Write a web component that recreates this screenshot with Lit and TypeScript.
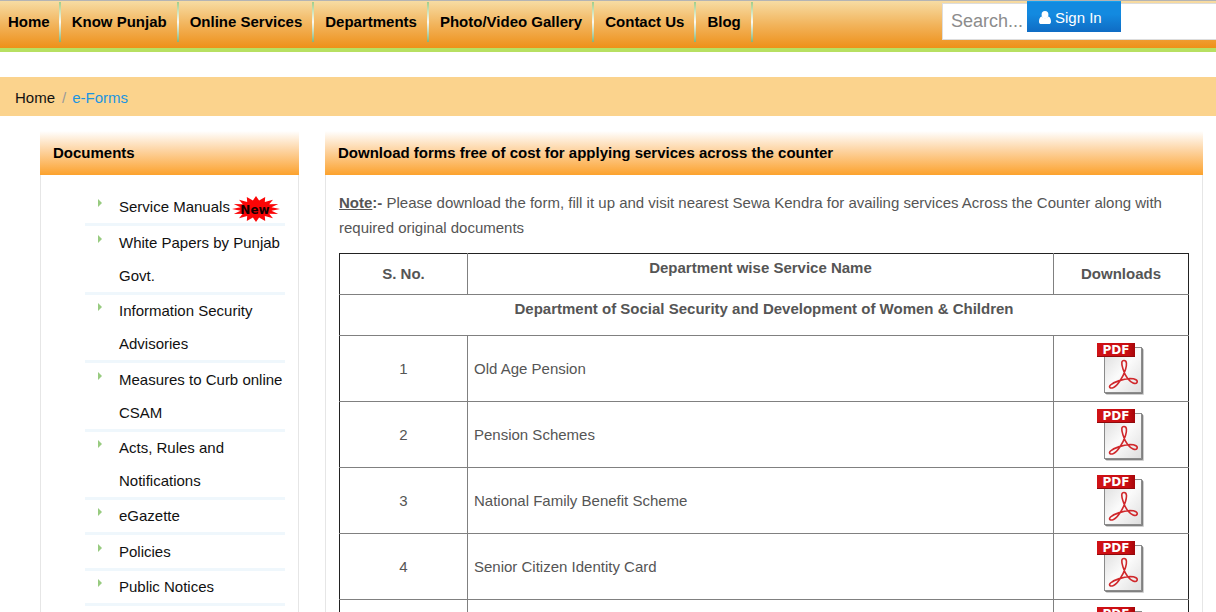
import { LitElement, html, css, svg, nothing } from "lit";
import { customElement } from "lit/decorators.js";

const NAV = ["Home", "Know Punjab", "Online Services", "Departments", "Photo/Video Gallery", "Contact Us", "Blog"];

const DOCUMENTS: { label: string; fresh?: boolean }[] = [
  { label: "Service Manuals", fresh: true },
  { label: "White Papers by Punjab Govt." },
  { label: "Information Security Advisories" },
  { label: "Measures to Curb online CSAM" },
  { label: "Acts, Rules and Notifications" },
  { label: "eGazette" },
  { label: "Policies" },
  { label: "Public Notices" },
];

const SERVICES = [
  { no: "1", name: "Old Age Pension" },
  { no: "2", name: "Pension Schemes" },
  { no: "3", name: "National Family Benefit Scheme" },
  { no: "4", name: "Senior Citizen Identity Card" },
  { no: "", name: "" },
];

// Spiky ellipse outline for the "New" badge.
function burst(cx: number, cy: number, rx: number, ry: number, spikes: number): string {
  const pts: string[] = [];
  for (let i = 0; i < spikes * 2; i++) {
    const a = (Math.PI * i) / spikes;
    const k = i % 2 ? 0.66 : 1;
    pts.push(`${(cx + Math.cos(a) * rx * k).toFixed(1)},${(cy + Math.sin(a) * ry * k).toFixed(1)}`);
  }
  return pts.join(" ");
}

@customElement("pdf-icon")
export class PdfIcon extends LitElement {
  static styles = css`
    :host { display: block; }
    svg { display: block; margin: 0 auto; }
    .label { font: bold 12px "DejaVu Sans", sans-serif; }
  `;
  render() {
    return html`<svg width="48" height="53" viewBox="0 0 48 53" aria-hidden="true">
      <defs>
        <linearGradient id="sheet" x1="0" y1="0" x2="1" y2="1">
          <stop offset="0" stop-color="#d9d9d9" /><stop offset="0.5" stop-color="#fbfbfb" /><stop offset="1" stop-color="#dedede" />
        </linearGradient>
        <linearGradient id="band" x1="0" y1="0" x2="1" y2="0">
          <stop offset="0" stop-color="#d01216" /><stop offset="0.8" stop-color="#c90d12" /><stop offset="1" stop-color="#a4060a" />
        </linearGradient>
      </defs>
      ${svg`
      <rect x="9" y="7" width="38" height="46" rx="1" fill="#cfcfcf" />
      <rect x="8" y="6" width="38" height="46" rx="1" fill="#808080" />
      <rect x="7.500" y="5.500" width="37" height="45" fill="url(#sheet)" stroke="#8a8a8a" />
      <path fill="none" stroke="#d0282c" stroke-width="1.600" stroke-linejoin="round" stroke-linecap="round"
        d="M26 27C24 21 24.500 18.500 27 18.500C30 18.500 30 22.500 28.500 27.500C26 35.500 20.500 43.500 16.500 45.500C13 47 11.500 45 13.500 43C17.500 39.500 26.500 37 33 36.500C38.500 36.500 41 38.500 40 40.500C38.500 43 34 40.500 31 37C28.500 34 27 30.500 26 27Z" />
      <rect x="0" y="1" width="38" height="14" fill="url(#band)" />
      <rect x="0" y="14" width="38" height="1" fill="#8e0a0c" />
      <text class="label" x="19" y="12" text-anchor="middle" fill="#fff">PDF</text>`}
    </svg>`;
  }
}

@customElement("new-badge")
export class NewBadge extends LitElement {
  static styles = css`
    :host { display: inline-block; margin-left: 2px; vertical-align: middle; }
    svg { display: block; }
    .word { font: bold 12px "DejaVu Sans", sans-serif; }
  `;
  render() {
    return html`<svg width="48" height="28" viewBox="0 0 48 28" role="img" aria-label="New">
      ${svg`<polygon points=${burst(24, 15, 24, 13, 16)} fill="#fb0506" />
      <text class="word" x="23" y="20" text-anchor="middle" fill="#150000">New</text>`}
    </svg>`;
  }
}

@customElement("app-root")
export class AppRoot extends LitElement {
  static styles = css`
    :host {
      display: block;
      height: 100vh;
      overflow: hidden;
      background: #fff;
      color: #555;
      font: 15px/25px "Liberation Sans", Arial, sans-serif;
    }
    *, *::before { box-sizing: border-box; }
    a { color: inherit; text-decoration: none; }
    ul, ol { list-style: none; margin: 0; padding: 0; }

    .bar {
      display: flex;
      justify-content: space-between;
      height: 52px;
      border-top: 1px solid #b4b4b4;
      border-bottom: 4px solid #b7e062;
      background: linear-gradient(#f7dca3, #f2b45c 50%, #ee9019);
    }
    .menu { display: flex; padding-top: 1px; }
    .menu li {
      height: 40px;
      padding: 0 10px 0 11px;
      border-right: 2px solid;
      border-image: linear-gradient(#9ccb84, #fdfaf0 50%, #7eb173) 1;
      border-image-width: 0 2px 0 0;
      color: #000;
      font-weight: bold;
      line-height: 40px;
      white-space: nowrap;
    }
    .menu li:first-child { padding: 0 9px 0 8px; }
    .search { position: relative; flex: 0 0 274px; padding-top: 2px; }
    .search input {
      display: block;
      width: 100%;
      height: 37px;
      padding: 0 8px;
      border: 1px solid #ddd;
      border-right: 0;
      border-radius: 0;
      background: #fff;
      font: 18px "Liberation Sans", Arial, sans-serif;
    }
    .search input::placeholder { color: #8c8c8c; opacity: 1; }
    .signin {
      position: absolute;
      top: 0;
      left: 85px;
      display: flex;
      align-items: center;
      gap: 4px;
      width: 94px;
      height: 31px;
      padding: 0 12px;
      border: 0;
      border-top: 1px solid #12a0f0;
      background: linear-gradient(#138ae0 40%, #0f6cc4);
      color: #fff;
      font: 15px "Liberation Sans", Arial, sans-serif;
      white-space: nowrap;
    }

    .crumbs {
      display: flex;
      margin-top: 25px;
      padding: 8px 15px 6px;
      background: #fbd38d;
      color: #111;
    }
    .crumbs li + li::before { content: "/"; padding: 0 6px 0 7px; color: #999; }
    .crumbs .here { color: #1b95e0; }

    .columns {
      display: grid;
      grid-template-columns: minmax(0, 259fr) minmax(0, 878fr);
      gap: 26px;
      padding: 15px 13px 0 40px;
    }
    .panel { border: 1px solid #e6e6e6; border-top: 0; min-height: 100vh; }
    .panel h2 {
      margin: 0 -1px;
      padding: 0 13px;
      background: linear-gradient(#fff, #fdd3a0 45%, #fca22d);
      color: #000;
      font-size: 15px;
      line-height: 44px;
    }
    .docs { padding: 15px 13px 0 44px; }
    .docs li {
      position: relative;
      padding-left: 34px;
      border-bottom: 3px solid #eff7fc;
      color: #111;
      line-height: 33px;
    }
    .docs li + li { margin-top: -1px; }
    .docs li:nth-child(3n + 1),
    .docs li:nth-child(2) { margin-top: 0; }
    .docs li::before {
      content: "";
      position: absolute;
      left: 13px;
      top: 9px;
      border: solid transparent;
      border-width: 4px 0 4px 4px;
      border-left-color: #98cb80;
    }
    .docs a { display: block; }
    .body { padding: 15px 13px 0; }
    .note { margin: 0 0 13px; }

    table { width: 100%; border-collapse: collapse; table-layout: fixed; border: 1px solid #222; }
    th, td { padding: 6px; border: 1px solid #808080; height: 66px; text-align: center; }
    tr > :first-child { border-left-color: #222; }
    tr > :last-child { border-right-color: #222; }
    thead th { border-top-color: #222; }
    th { height: 41px; padding: 5px 6px 7px; }
    th.title { padding: 1px 6px 14px; vertical-align: top; }
    td.name { text-align: left; }
    .no { width: 128px; }
    .dl { width: 135px; }
  `;

  render() {
    return html`
      <header class="bar">
        <nav aria-label="Main"><ul class="menu">${NAV.map((n) => html`<li><a href="#">${n}</a></li>`)}</ul></nav>
        <div class="search">
          <input type="search" placeholder="Search..." aria-label="Search" />
          <button class="signin" type="button">
            <svg width="12" height="13" viewBox="0 0 13 14" fill="#fff" aria-hidden="true">
              <ellipse cx="6.500" cy="4" rx="3.700" ry="4" />
              <path d="M3 6C1 6.500 0 8.500 0 11.500C0 13 1 14 2.500 14H10.500C12 14 13 13 13 11.500C13 8.500 12 6.500 10 6C8 8.500 5 8.500 3 6Z" />
            </svg>
            Sign In
          </button>
        </div>
      </header>
      <nav aria-label="Breadcrumb">
        <ol class="crumbs"><li><a href="#">Home</a></li><li><a class="here" href="#">e-Forms</a></li></ol>
      </nav>
      <main class="columns">
        <aside class="panel">
          <h2>Documents</h2>
          <ul class="docs">
            ${DOCUMENTS.map((d) => html`<li><a href="#">${d.label}${d.fresh ? html`<new-badge></new-badge>` : nothing}</a></li>`)}
          </ul>
        </aside>
        <section class="panel">
          <h2>Download forms free of cost for applying services across the counter</h2>
          <div class="body">
            <p class="note"><b><u>Note</u>:-</b> Please download the form, fill it up and visit nearest Sewa Kendra for availing services Across the Counter along with required original documents</p>
            <table>
              <thead>
                <tr><th class="no">S. No.</th><th class="title">Department wise Service Name</th><th class="dl">Downloads</th></tr>
              </thead>
              <tbody>
                <tr><th class="title" colspan="3">Department of Social Security and Development of Women &amp; Children</th></tr>
                ${SERVICES.map((s) => html`<tr>
                  <td>${s.no}</td>
                  <td class="name">${s.name}</td>
                  <td><a href="#" aria-label="PDF"><pdf-icon></pdf-icon></a></td>
                </tr>`)}
              </tbody>
            </table>
          </div>
        </section>
      </main>
    `;
  }
}
